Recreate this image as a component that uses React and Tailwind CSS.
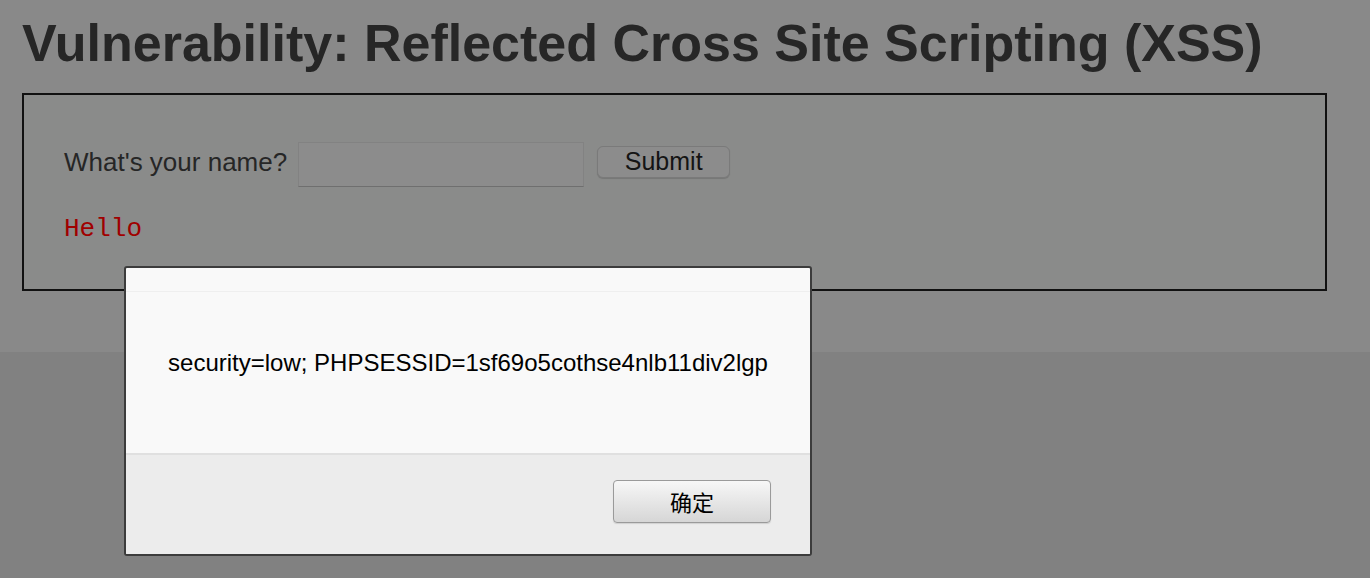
import React from "react";

export default function App() {
  return (
    <div className="relative w-[1370px] h-[578px] overflow-hidden flex flex-col bg-[#818181]" style={{ fontFamily: '"Liberation Sans", Arial, sans-serif' }}>
      <div className="h-[352px] bg-[#898989] pl-[22px] pr-[43px] pt-[13px]">
        <h1 className="text-[52px] leading-[60px] font-bold text-[#262626] whitespace-nowrap">
          Vulnerability: Reflected Cross Site Scripting (XSS)
        </h1>
        <div className="mt-[20px] h-[198px] border-2 border-[#111111] bg-[#8a8b8a] pl-[40px] pt-[47px]">
          <div className="flex items-center h-[45px]">
            <span className="text-[26px] text-[#262626] leading-none mb-[6px]">What's your name?</span>
            <div className="ml-[11px] w-[286px] h-[45px] bg-[#8c8c8c] border border-[#828282] border-b-[#6f6f6f]"></div>
            <div className="ml-[13px] mb-[6px] w-[133px] h-[32px] rounded-[6px] border border-[#7a7a7a] bg-[#8c8c8c] shadow-[0_1px_1px_rgba(0,0,0,0.15)] flex items-center justify-center text-[25px] text-[#141414] leading-none">
              Submit
            </div>
          </div>
          <div className="mt-[27px] text-[26px] leading-[30px] text-[#a00000]" style={{ fontFamily: '"Liberation Mono", "Courier New", monospace' }}>
            Hello
          </div>
        </div>
      </div>
      <div className="flex-1"></div>

      <div className="absolute left-[124px] top-[266px] w-[688px] h-[290px] border-2 border-[#3c3c3c] rounded-[3px] bg-[#f9f9f9] flex flex-col overflow-hidden">
        <div className="h-[24px] border-b border-[#efefef]"></div>
        <div className="flex-1 flex items-center justify-center text-[24px] text-black pb-[20px]">
          security=low; PHPSESSID=1sf69o5cothse4nlb11div2lgp
        </div>
        <div className="h-[101px] border-t-2 border-[#e0e0e0] bg-[#ececec] flex justify-end pr-[39px] pt-[25px]">
          <div className="w-[158px] h-[43px] rounded-[4px] border border-[#9a9a9a] bg-gradient-to-b from-[#f7f7f7] to-[#d6d6d6] shadow-[0_1px_1px_rgba(0,0,0,0.12)] flex items-center justify-center text-[22px] text-black" style={{ fontFamily: '"Noto Sans CJK SC", "Liberation Sans", sans-serif' }}>
            确定
          </div>
        </div>
      </div>
    </div>
  );
}
